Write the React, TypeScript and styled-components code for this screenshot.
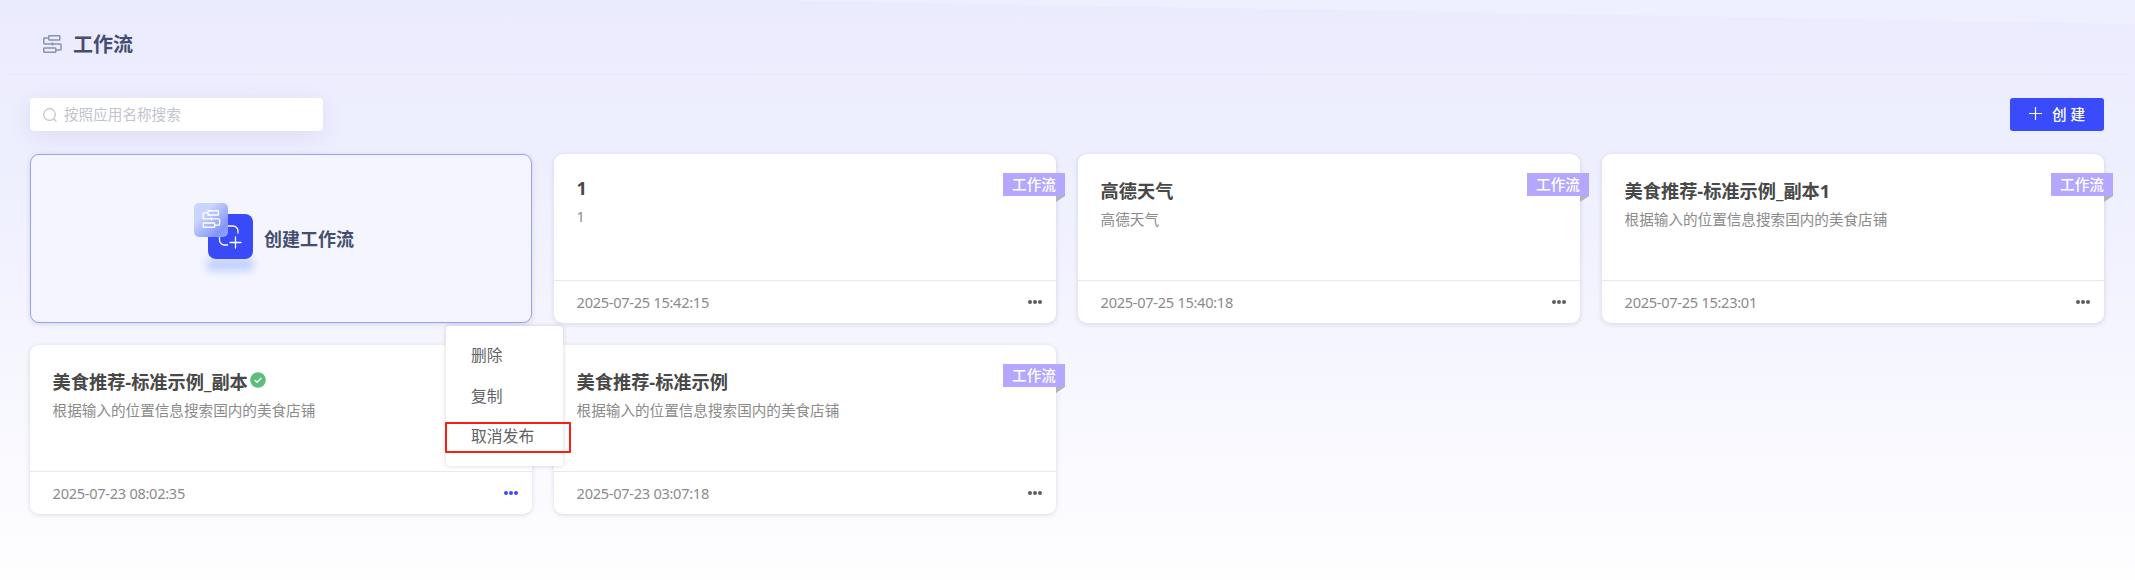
import React from "react";
import styled, { createGlobalStyle, css } from "styled-components";

const Global = createGlobalStyle`
  * { box-sizing: border-box; }
  body {
    margin: 0;
    font-family: "Noto Sans", "Noto Sans CJK SC", sans-serif;
    color: #454545;
  }
`;

const Page = styled.main`
  position: relative;
  isolation: isolate;
  width: 100%;
  height: 580px;
  overflow: hidden;
  background: linear-gradient(180deg, #ebebfe 0%, #eeeffe 28%, #f5f5ff 58%, #fefeff 100%);
  &::before {
    content: "";
    position: absolute;
    z-index: -1;
    top: 0;
    right: 0;
    width: 1370px;
    height: 24px;
    background: #eeefff;
    clip-path: polygon(0 0, 100% 0, 100% 100%);
  }
`;

const Header = styled.header`
  display: flex;
  align-items: center;
  gap: 11px;
  height: 75px;
  margin: 0 9px 0 8px;
  padding: 14px 0 0 34px;
  border-bottom: 1px solid #e6e8ea;
  color: #8794ae;
`;

const PageTitle = styled.h1`
  margin: 0;
  padding-top: 2px;
  font-size: 20px;
  line-height: 28px;
  font-weight: 700;
  color: #454e72;
`;

const Toolbar = styled.div`
  display: flex;
  justify-content: space-between;
  padding: 23px 31px 23px 30px;
`;

const SearchBox = styled.div`
  display: flex;
  align-items: center;
  gap: 7px;
  width: 293px;
  height: 33px;
  padding-left: 13px;
  border-radius: 4px;
  background: #fff;
  box-shadow: 0 6px 24px rgba(80, 80, 170, 0.1);
  color: #c0c4cc;
  font-size: 14.6px;
`;

const SearchHint = styled.span`
  padding-bottom: 3px;
`;

const CreateButton = styled.button`
  display: flex;
  align-items: center;
  gap: 10px;
  width: 94px;
  height: 33px;
  padding: 0 0 2px 19px;
  border: 0;
  border-radius: 3px;
  background: #3a4bfb;
  color: #fff;
  font: 500 14.6px "Noto Sans CJK SC", sans-serif;
  letter-spacing: 4px;
`;

const CardGrid = styled.section`
  display: grid;
  grid-template-columns: repeat(4, 1fr);
  grid-auto-rows: 169px;
  gap: 22px;
  padding: 0 31px 0 30px;
`;

const cardFrame = css`
  position: relative;
  border-radius: 9px;
  box-shadow: 0 1px 5px rgba(60, 60, 120, 0.18);
`;

const CreateCard = styled.div`
  ${cardFrame}
  display: flex;
  align-items: center;
  justify-content: center;
  padding-right: 16px;
  border: 1px solid #98a2fb;
  background: #f4f5ff;
`;

const CreateLabel = styled.span`
  padding-bottom: 2px;
  font-size: 18px;
  font-weight: 700;
  color: #454e6e;
`;

const Card = styled.article`
  ${cardFrame}
  display: flex;
  flex-direction: column;
  background: #fff;
`;

const CardBody = styled.div`
  flex: 1;
  padding: 21px 22px 0 22.6px;
`;

const CardTitle = styled.h2<{ $latin?: boolean }>`
  display: flex;
  align-items: center;
  gap: 2px;
  margin: 0;
  height: ${(p) => (p.$latin ? 26 : 29)}px;
  font-size: 18.2px;
  font-weight: 700;
  color: #484848;
`;

const CardText = styled.p`
  margin: 3px 0 0;
  font-size: 14.6px;
  line-height: 24px;
  color: #8b8b8b;
`;

const CardFooter = styled.footer`
  display: flex;
  align-items: center;
  justify-content: space-between;
  height: 43px;
  padding: 0 14px 0 22.6px;
  border-top: 1px solid #e9e9eb;
  font-size: 14.6px;
  letter-spacing: -0.29px;
  color: #8b8b8b;
`;

const Dots = styled.span<{ $active?: boolean }>`
  display: flex;
  gap: 1px;
  padding-bottom: 1px;
  color: ${(p) => (p.$active ? "#3a4bfb" : "#5c5e63")};
`;

const Dot = styled.i`
  width: 4px;
  height: 4px;
  border-radius: 50%;
  background: currentColor;
`;

const Tag = styled.div`
  position: absolute;
  top: 19px;
  right: -9px;
  width: 62px;
  height: 23px;
  background: #b4a7ff;
  color: #fff;
  font-size: 14.6px;
  font-weight: 500;
  line-height: 23px;
  text-align: center;
  &::after {
    content: "";
    position: absolute;
    right: 0;
    top: 100%;
    border-top: 6px solid #b2b2bb;
    border-right: 9px solid transparent;
  }
`;

const Menu = styled.ul`
  position: absolute;
  z-index: 2;
  left: 446px;
  top: 326px;
  width: 117px;
  height: 140px;
  margin: 0;
  padding: 9px 0;
  border-radius: 4px;
  background: #fff;
  box-shadow: 0 0 4px rgba(60, 60, 120, 0.22);
  list-style: none;
`;

const MenuItem = styled.li`
  height: 40.7px;
  padding-left: 25px;
  font-size: 15.8px;
  line-height: 40px;
  color: #606266;
`;

const Highlight = styled.div`
  position: absolute;
  z-index: 3;
  left: 445px;
  top: 422px;
  width: 126px;
  height: 31px;
  border: 2px solid #fb1d11;
  border-radius: 1px;
`;

const FlowShape = () => (
  <>
    <rect x="6.8" y="1.8" width="11" height="4.2" rx=".6" />
    <path d="M6.8 3.9H2.600a.8.8 0 0 0-.8.8v4.400a.8.8 0 0 0 .8.8H18.200a.8.8 0 0 1 .8.8v4.600a.8.8 0 0 1-.8.8h-4.400M10.400 8.400v3" />
    <rect x="1.800" y="14" width="12" height="4.300" rx=".6" />
  </>
);

const FlowGlyph = () => (
  <svg width="20" height="20" viewBox="0 0 20 20" fill="none" stroke="currentColor" strokeWidth="1.500" strokeLinejoin="round">
    <FlowShape />
  </svg>
);

const SearchGlyph = () => (
  <svg width="14" height="14" viewBox="0 0 14 14" fill="none" stroke="currentColor" strokeWidth="1.200" strokeLinecap="round">
    <circle cx="6.500" cy="6.500" r="5.800" />
    <path d="m11 11 2 2" />
  </svg>
);

const PlusGlyph = () => (
  <svg width="13" height="13" viewBox="0 0 13 13" stroke="currentColor" strokeWidth="1.200">
    <path d="M6.500 0v13M0 6.500h13" />
  </svg>
);

const CreateGlyph = () => (
  <svg width="72" height="78" viewBox="0 0 72 78" fill="none">
    <defs>
      <linearGradient id="pane" x1="0" y1="0" x2="1" y2="1">
        <stop offset=".3" stopColor="#c8d5ff" />
        <stop offset=".8" stopColor="#8494fd" />
        <stop offset="1" stopColor="#98a6fe" />
      </linearGradient>
      <filter id="soft" x="-40%" y="-120%" width="180%" height="340%">
        <feGaussianBlur stdDeviation="4.500" />
      </filter>
    </defs>
    <rect x="14" y="58" width="48" height="13" rx="6" fill="#c0cfff" filter="url(#soft)" />
    <rect x="16" y="14" width="45" height="45" rx="8" fill="#394af8" />
    <g stroke="#fff" strokeWidth="1.300" strokeLinecap="round">
      <path d="M36 26h5a5 5 0 0 1 5 5v2M27.500 37v3a5 5 0 0 0 5 5h3M43.500 37v11M38 42.500h11" />
    </g>
    <rect x="2" y="3" width="34" height="34" rx="5" fill="url(#pane)" />
    <g transform="translate(9.500 9) scale(.95 1)" stroke="#fff" strokeWidth="1.400" strokeLinejoin="round">
      <FlowShape />
    </g>
  </svg>
);

const PublishedGlyph = () => (
  <svg width="16" height="18" viewBox="0 0 16 18">
    <circle cx="8" cy="8" r="7.800" fill="#5dbd7c" />
    <path d="m4.800 8 2.300 2.300 4.200-4.200" fill="none" stroke="#fff" strokeWidth="1.400" />
  </svg>
);

interface Flow {
  name: string;
  text: string;
  time: string;
  published?: boolean;
}

const foodText = "根据输入的位置信息搜索国内的美食店铺";
const flows: Flow[] = [
  { name: "1", text: "1", time: "2025-07-25 15:42:15" },
  { name: "高德天气", text: "高德天气", time: "2025-07-25 15:40:18" },
  { name: "美食推荐-标准示例_副本1", text: foodText, time: "2025-07-25 15:23:01" },
  { name: "美食推荐-标准示例_副本", text: foodText, time: "2025-07-23 08:02:35", published: true },
  { name: "美食推荐-标准示例", text: foodText, time: "2025-07-23 03:07:18" },
];

const FlowCard = ({ flow }: { flow: Flow }) => (
  <Card>
    <CardBody>
      <CardTitle $latin={flow.name === "1"}>
        {flow.name}
        {flow.published && <PublishedGlyph />}
      </CardTitle>
      <CardText>{flow.text}</CardText>
    </CardBody>
    <CardFooter>
      {flow.time}
      <Dots $active={flow.published}>
        <Dot />
        <Dot />
        <Dot />
      </Dots>
    </CardFooter>
    {!flow.published && <Tag>工作流</Tag>}
  </Card>
);

export default function App() {
  return (
    <Page>
      <Global />
      <Header>
        <FlowGlyph />
        <PageTitle>工作流</PageTitle>
      </Header>
      <Toolbar>
        <SearchBox>
          <SearchGlyph />
          <SearchHint>按照应用名称搜索</SearchHint>
        </SearchBox>
        <CreateButton>
          <PlusGlyph />
          创建
        </CreateButton>
      </Toolbar>
      <CardGrid>
        <CreateCard>
          <CreateGlyph />
          <CreateLabel>创建工作流</CreateLabel>
        </CreateCard>
        {flows.map((flow) => (
          <FlowCard key={flow.name} flow={flow} />
        ))}
      </CardGrid>
      <Menu>
        <MenuItem>删除</MenuItem>
        <MenuItem>复制</MenuItem>
        <MenuItem>取消发布</MenuItem>
      </Menu>
      <Highlight />
    </Page>
  );
}
